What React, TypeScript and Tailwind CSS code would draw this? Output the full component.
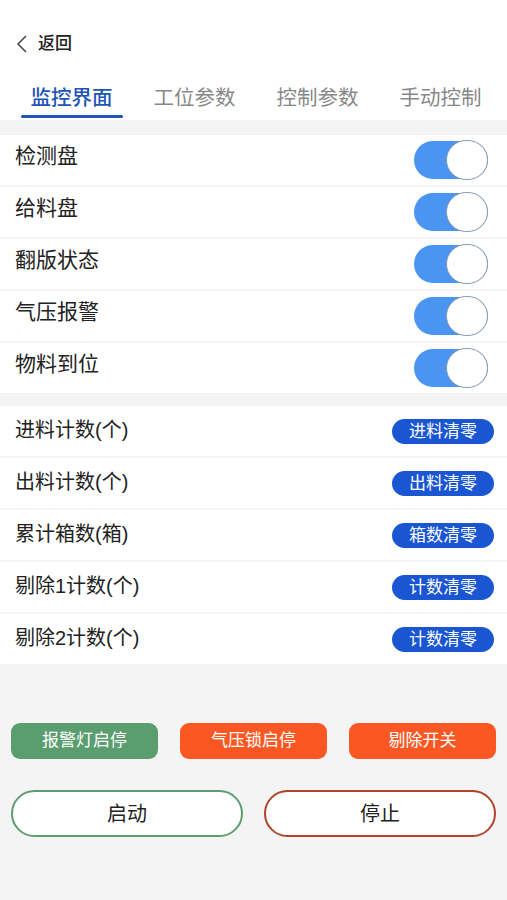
import React from 'react';

const switches = ['检测盘', '给料盘', '翻版状态', '气压报警', '物料到位'];

const counters = [
  { label: '进料计数(个)', action: '进料清零' },
  { label: '出料计数(个)', action: '出料清零' },
  { label: '累计箱数(箱)', action: '箱数清零' },
  { label: '剔除1计数(个)', action: '计数清零' },
  { label: '剔除2计数(个)', action: '计数清零' },
];

const tabs = ['监控界面', '工位参数', '控制参数', '手动控制'];

function Toggle() {
  return (
    <div className="relative w-[74px] h-[38px] rounded-full bg-[#4a95f1]">
      <div className="absolute right-0 top-[-1px] w-[42px] h-[40px] rounded-full bg-white border border-[#8a9bb0]" />
    </div>
  );
}

export default function App() {
  return (
    <div
      className="w-[507px] h-[900px] bg-[#f4f4f4] text-[#222]"
      style={{ fontFamily: '"Liberation Sans", "Noto Sans CJK SC", sans-serif' }}
    >
      {/* 顶部 */}
      <div className="bg-white">
        <div className="h-[86px] flex items-center px-[15px] pt-[1px]">
          <svg width="14" height="18" viewBox="0 0 14 18" className="mr-[9px]">
            <path d="M11 1 L3 9 L11 17" fill="none" stroke="#444" strokeWidth="1.5" />
          </svg>
          <span className="text-[17px] font-medium">返回</span>
        </div>
        <div className="grid grid-cols-[123px_123px_123px_123px] h-[34px] pl-[10px]">
          {tabs.map((t, i) => (
            <div key={t} className="flex flex-col items-center">
              <span
                className={
                  'text-[20.5px] leading-[24px] whitespace-nowrap ' +
                  (i === 0 ? 'text-[#1f55b5] font-medium' : 'text-[#888]')
                }
              >
                {t}
              </span>
              {i === 0 && <div className="mt-[5px] w-[102px] h-[3px] rounded bg-[#1f55b5]" />}
            </div>
          ))}
        </div>
      </div>

      <div className="h-[15px]" />

      <div className="flex flex-col gap-[2px]">
        {switches.map((s) => (
          <div key={s} className="bg-white h-[50px] flex items-center justify-between pl-[15px] pr-[19px]">
            <span className="text-[21px] mb-[8px]">{s}</span>
            <Toggle />
          </div>
        ))}
      </div>

      <div className="h-[13px]" />

      <div className="flex flex-col gap-[2px]">
        {counters.map((c, i) => (
          <div key={i} className="bg-white h-[50px] flex items-center justify-between pl-[15px] pr-[13px]">
            <span className="text-[20px] mb-[2px]">{c.label}</span>
            <button className="w-[102px] h-[25px] rounded-full bg-[#1a55d2] text-white text-[17px] leading-none">
              {c.action}
            </button>
          </div>
        ))}
      </div>

      <div className="flex justify-between px-[11px] mt-[59px]">
        <button className="w-[147px] h-[36px] rounded-[9px] bg-[#5a9d6f] text-white text-[17px]">报警灯启停</button>
        <button className="w-[147px] h-[36px] rounded-[9px] bg-[#fb5722] text-white text-[17px]">气压锁启停</button>
        <button className="w-[147px] h-[36px] rounded-[9px] bg-[#fb5722] text-white text-[17px]">剔除开关</button>
      </div>

      <div className="flex justify-between px-[11px] mt-[31px]">
        <button className="w-[232px] h-[47px] rounded-full bg-white border-[2px] border-[#5e9c72] text-[20px]">启动</button>
        <button className="w-[232px] h-[47px] rounded-full bg-white border-[2px] border-[#b0432a] text-[20px]">停止</button>
      </div>
    </div>
  );
}
